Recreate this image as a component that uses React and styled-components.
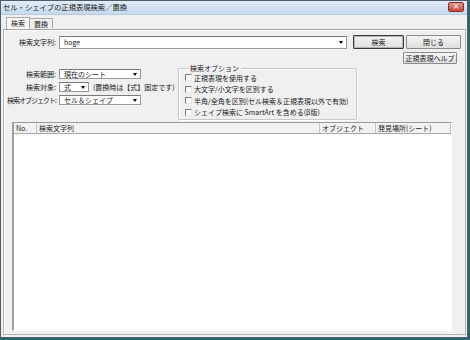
import React from "react";
import styled, { createGlobalStyle } from "styled-components";

const GlobalStyle = createGlobalStyle`
  html, body {
    margin: 0;
    padding: 0;
    background: #2a6870;
  }
  body {
    font-family: "Noto Sans CJK JP", "Noto Sans", sans-serif;
    font-size: 7px;
    color: #1a1a1a;
  }
`;

const columns = [
  { title: "No.", width: 23 },
  { title: "検索文字列", width: 283 },
  { title: "オブジェクト", width: 56 },
  { title: "発見場所(シート)", width: null },
];

const options = [
  "正規表現を使用する",
  "大文字/小文字を区別する",
  "半角/全角を区別(セル検索＆正規表現以外で有効)",
  "シェイプ検索に SmartArt を含める(β版)",
];

const App = () => {
  return (
    <>
      <GlobalStyle />
      <Window>
        <TitleBar>
          <Title>セル・シェイプの正規表現検索／置換</Title>
          <CloseBtn>×</CloseBtn>
        </TitleBar>
        <Tabs>
          <Tab $active>検索</Tab>
          <Tab>置換</Tab>
        </Tabs>
        <Panel>
          <Row>
            <Label>検索文字列:</Label>
            <Combo $width={288}>
              <ComboText>hoge</ComboText>
              <Arrow />
            </Combo>
            <Button $default $width={51}>検索</Button>
            <Button $width={55}>閉じる</Button>
          </Row>
          <Middle>
            <Form>
              <FormRow>
                <Label>検索範囲:</Label>
                <Combo $width={82} $small>
                  <ComboText>現在のシート</ComboText>
                  <Arrow />
                </Combo>
              </FormRow>
              <FormRow>
                <Label>検索対象:</Label>
                <Combo $width={30} $small>
                  <ComboText>式</ComboText>
                  <Arrow />
                </Combo>
                <Note>(置換時は【式】固定です)</Note>
              </FormRow>
              <FormRow>
                <Label $tight>検索オブジェクト:</Label>
                <Combo $width={82} $small>
                  <ComboText>セル＆シェイプ</ComboText>
                  <Arrow />
                </Combo>
              </FormRow>
            </Form>
            <Group>
              <Legend>検索オプション</Legend>
              {options.map((o) => (
                <Check key={o}>
                  <Box />
                  {o}
                </Check>
              ))}
            </Group>
            <Spacer />
            <Button $width={54} $help>正規表現ヘルプ</Button>
          </Middle>
          <List>
            <Header>
              {columns.map((c) => (
                <Col key={c.title} $width={c.width}>
                  {c.title}
                </Col>
              ))}
            </Header>
          </List>
        </Panel>
      </Window>
    </>
  );
};

const Window = styled.div`
  width: 468px;
  height: 338px;
  box-sizing: border-box;
  background: #f0f0f0;
  border: 1px solid #4f5d6b;
  display: flex;
  flex-direction: column;
`;

const TitleBar = styled.div`
  height: 13px;
  flex: none;
  display: flex;
  align-items: center;
  justify-content: space-between;
  padding-left: 2px;
  background: linear-gradient(#e2ecf7, #c6d9ee);
  border-bottom: 1px solid #b9cbe0;
`;

const Title = styled.span`
  font-size: 7.3px;
  line-height: 1;
`;

const CloseBtn = styled.div`
  width: 14px;
  height: 8px;
  margin-right: 3px;
  margin-top: -1px;
  border: 1px solid #8c2f27;
  border-radius: 2px;
  background: linear-gradient(#e0958c, #c5483c);
  color: #fff;
  font-size: 8px;
  line-height: 8px;
  text-align: center;
  font-family: "DejaVu Sans", sans-serif;
`;

const Tabs = styled.div`
  display: flex;
  align-items: flex-end;
  height: 14px;
  padding-left: 5px;
`;

const Tab = styled.div`
  height: ${(p) => (p.$active ? "12px" : "10px")};
  line-height: ${(p) => (p.$active ? "11px" : "10px")};
  padding: 0 4px;
  box-sizing: border-box;
  background: ${(p) => (p.$active ? "#fafafa" : "#f0f0f0")};
  border: 1px solid #a8a8a8;
  border-bottom: none;
  ${(p) => !p.$active && "border-left: none; margin-bottom: 1px;"}
`;

const Panel = styled.div`
  flex: 1;
  margin: 0 1px 2px 2px;
  border: 1px solid #b4b4b4;
  border-top-color: #a0a0a0;
  box-shadow: inset 1px 1px 0 #fff;
  display: flex;
  flex-direction: column;
  padding: 5px 6px 3px 7px;
`;

const Row = styled.div`
  display: flex;
  align-items: center;
  height: 14px;
`;

const Label = styled.div`
  width: 45px;
  flex: none;
  margin-right: 3px;
  display: flex;
  justify-content: flex-end;
  white-space: nowrap;
  letter-spacing: ${(p) => (p.$tight ? "-1px" : "0")};
`;

const Combo = styled.div`
  width: ${(p) => p.$width}px;
  flex: none;
  height: ${(p) => (p.$small ? "10px" : "13px")};
  box-sizing: border-box;
  background: #fff;
  border: 1px solid #9a9a9a;
  border-top-color: #7a7a7a;
  display: flex;
  align-items: center;
  padding-left: 4px;
  margin-right: 6px;
`;

const ComboText = styled.span`
  flex: 1;
  white-space: nowrap;
  overflow: hidden;
`;

const Arrow = styled.div`
  width: 8px;
  height: 100%;
  display: flex;
  align-items: center;
  justify-content: center;
  margin-right: 1px;
  &::after {
    content: "";
    border-left: 2.5px solid transparent;
    border-right: 2.5px solid transparent;
    border-top: 3px solid #000;
  }
`;

const Button = styled.div`
  width: ${(p) => p.$width}px;
  flex: none;
  height: ${(p) => (p.$help ? "12px" : "14px")};
  box-sizing: border-box;
  margin-right: 2px;
  margin-top: ${(p) => (p.$help ? "1px" : "0")};
  border: 1px solid ${(p) => (p.$default ? "#3a3a3a" : "#8a8a8a")};
  border-radius: 1px;
  background: linear-gradient(#f4f4f4, #dedede);
  box-shadow: ${(p) => (p.$default ? "inset 0 0 0 1px #b5b5b5" : "none")};
  display: flex;
  align-items: center;
  justify-content: center;
  white-space: nowrap;
`;

const Middle = styled.div`
  display: flex;
  align-items: flex-start;
  margin-top: 2px;
`;

const Form = styled.div`
  width: 160px;
  margin-top: 18px;
  display: flex;
  flex-direction: column;
  gap: 3px;
`;

const FormRow = styled.div`
  display: flex;
  align-items: center;
  height: 10px;
`;

const Note = styled.span`
  margin-left: -2px;
  white-space: nowrap;
`;

const Group = styled.fieldset`
  width: 179px;
  box-sizing: border-box;
  margin: 13px 0 0 7px;
  padding: 0 4px 1px 6px;
  border: 1px solid #c8c8c8;
  border-radius: 2px;
  box-shadow: 1px 1px 0 #fff, inset 1px 1px 0 #fff;
  min-inline-size: 0;
`;

const Legend = styled.legend`
  padding: 0 2px;
  margin-left: 3px;
  line-height: 8px;
`;

const Check = styled.div`
  height: 11.5px;
  display: flex;
  align-items: center;
  gap: 2px;
  white-space: nowrap;
`;

const Box = styled.div`
  width: 7px;
  height: 7px;
  box-sizing: border-box;
  background: #fff;
  border: 1px solid #7b7b7b;
  border-right-color: #e6e6e6;
  border-bottom-color: #e6e6e6;
`;

const Spacer = styled.div`
  flex: 1;
`;

const List = styled.div`
  flex: 1;
  margin: 2px 7px 0 1px;
  background: #fff;
  border: 1px solid #fff;
  border-top: 1px solid #9c9c9c;
  border-left: 2px solid #a0a0a0;
  display: flex;
  flex-direction: column;
`;

const Header = styled.div`
  display: flex;
  height: 10px;
  background: #f2f2f2;
  border-bottom: 1px solid #a8a8a8;
`;

const Col = styled.div`
  ${(p) => (p.$width ? `width: ${p.$width}px;` : "flex: 1;")}
  box-sizing: border-box;
  padding-left: 2px;
  line-height: 10px;
  border-right: 1px solid #c4c4c4;
  white-space: nowrap;
  overflow: hidden;
`;

export default App;
